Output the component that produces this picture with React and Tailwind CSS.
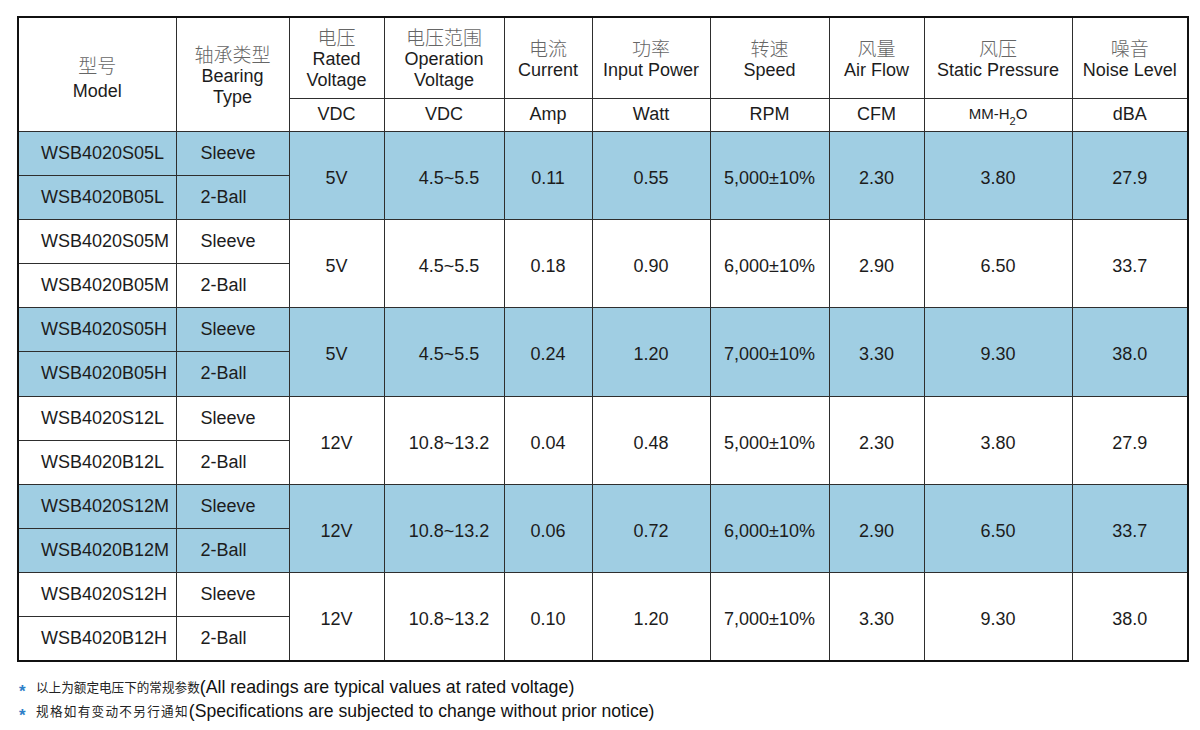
import React from "react";

const groups = [
  { blue: true, m: ["WSB4020S05L", "WSB4020B05L"], v: "5V", op: "4.5~5.5", a: "0.11", w: "0.55", rpm: "5,000±10%", cfm: "2.30", p: "3.80", db: "27.9" },
  { blue: false, m: ["WSB4020S05M", "WSB4020B05M"], v: "5V", op: "4.5~5.5", a: "0.18", w: "0.90", rpm: "6,000±10%", cfm: "2.90", p: "6.50", db: "33.7" },
  { blue: true, m: ["WSB4020S05H", "WSB4020B05H"], v: "5V", op: "4.5~5.5", a: "0.24", w: "1.20", rpm: "7,000±10%", cfm: "3.30", p: "9.30", db: "38.0" },
  { blue: false, m: ["WSB4020S12L", "WSB4020B12L"], v: "12V", op: "10.8~13.2", a: "0.04", w: "0.48", rpm: "5,000±10%", cfm: "2.30", p: "3.80", db: "27.9" },
  { blue: true, m: ["WSB4020S12M", "WSB4020B12M"], v: "12V", op: "10.8~13.2", a: "0.06", w: "0.72", rpm: "6,000±10%", cfm: "2.90", p: "6.50", db: "33.7" },
  { blue: false, m: ["WSB4020S12H", "WSB4020B12H"], v: "12V", op: "10.8~13.2", a: "0.10", w: "1.20", rpm: "7,000±10%", cfm: "3.30", p: "9.30", db: "38.0" },
];

const cjk = "font-['Noto_Sans_CJK_SC',sans-serif] text-[19px] leading-[25px] text-[#666] font-light";
const en = "text-[18px] leading-[21px] text-[#1c1c1c]";
const cell = "border border-[#2e2e2e] p-0 align-middle";
const span = `${cell} pt-[6px]`;

function Head({ zh, lines, gap = "" }) {
  return (
    <div className="flex flex-col items-center">
      <div className={cjk}>{zh}</div>
      {lines.map((l) => (
        <div key={l} className={`${en} ${gap}`}>{l}</div>
      ))}
    </div>
  );
}

export default function App() {
  return (
    <div className="w-[1200px] h-[730px] bg-white font-['Liberation_Sans',Arial,sans-serif] text-[#1c1c1c] overflow-hidden">
      <div className="pt-[16px] pl-[17px]">
        <table className="table-fixed border-collapse border-2 border-[#111] w-[1172px] text-center">
          <colgroup>
            <col className="w-[158px]" />
            <col className="w-[113px]" />
            <col className="w-[95px]" />
            <col className="w-[120px]" />
            <col className="w-[88px]" />
            <col className="w-[118px]" />
            <col className="w-[119px]" />
            <col className="w-[95px]" />
            <col className="w-[148px]" />
            <col className="w-[116px]" />
          </colgroup>
          <thead>
            <tr className="h-[81px]">
              <th rowSpan={2} className={`${cell} font-normal`}>
                <div className="pt-[6px]"><Head zh="型号" lines={["Model"]} gap="mt-[4px]" /></div>
              </th>
              <th rowSpan={2} className={`${cell} font-normal`}>
                <Head zh="轴承类型" lines={["Bearing", "Type"]} />
              </th>
              <th className={`${cell} font-normal`}><Head zh="电压" lines={["Rated", "Voltage"]} /></th>
              <th className={`${cell} font-normal`}><Head zh="电压范围" lines={["Operation", "Voltage"]} /></th>
              <th className={`${cell} font-normal`}><Head zh="电流" lines={["Current"]} /></th>
              <th className={`${cell} font-normal`}><Head zh="功率" lines={["Input Power"]} /></th>
              <th className={`${cell} font-normal`}><Head zh="转速" lines={["Speed"]} /></th>
              <th className={`${cell} font-normal`}><Head zh="风量" lines={["Air Flow"]} /></th>
              <th className={`${cell} font-normal`}><Head zh="风压" lines={["Static Pressure"]} /></th>
              <th className={`${cell} font-normal`}><Head zh="噪音" lines={["Noise Level"]} /></th>
            </tr>
            <tr className="h-[33px]">
              {["VDC", "VDC", "Amp", "Watt", "RPM", "CFM"].map((u, i) => (
                <th key={i} className={`${cell} font-normal text-[18px]`}>{u}</th>
              ))}
              <th className={`${cell} font-normal text-[15px]`}>
                MM-H<sub className="text-[11px] align-[-3px]">2</sub>O
              </th>
              <th className={`${cell} font-normal text-[18px]`}>dBA</th>
            </tr>
          </thead>
          <tbody className="text-[18px]">
            {groups.map((g, gi) => {
              const bg = g.blue ? "bg-[#a0cee3]" : "bg-white";
              const h2 = gi === 2 || gi === 5 ? "h-[45px]" : "h-[44px]";
              return (
                <React.Fragment key={gi}>
                  <tr className={`h-[44px] ${bg}`}>
                    <td className={`${cell} text-left pl-[22px]`}>{g.m[0]}</td>
                    <td className={`${cell} text-left pl-[24px]`}>Sleeve</td>
                    <td rowSpan={2} className={span}>{g.v}</td>
                    <td rowSpan={2} className={`${span} pl-[10px]`}>{g.op}</td>
                    <td rowSpan={2} className={span}>{g.a}</td>
                    <td rowSpan={2} className={span}>{g.w}</td>
                    <td rowSpan={2} className={span}>{g.rpm}</td>
                    <td rowSpan={2} className={span}>{g.cfm}</td>
                    <td rowSpan={2} className={span}>{g.p}</td>
                    <td rowSpan={2} className={span}>{g.db}</td>
                  </tr>
                  <tr className={`${h2} ${bg}`}>
                    <td className={`${cell} text-left pl-[22px]`}>{g.m[1]}</td>
                    <td className={`${cell} text-left pl-[24px]`}>2-Ball</td>
                  </tr>
                </React.Fragment>
              );
            })}
          </tbody>
        </table>
      </div>
      <div className="mt-[14px] pl-[19px] flex flex-col gap-[2px]">
        <div className="flex items-center h-[22px]">
          <span className="text-[#2f7fc8] text-[17px] font-bold w-[17px] translate-y-[5px]">*</span>
          <span className="font-['Noto_Sans_CJK_SC',sans-serif] text-[12.6px] text-[#222]">以上为额定电压下的常规参数</span>
          <span className="text-[17.8px] text-[#111]">(All readings are typical values at rated voltage)</span>
        </div>
        <div className="flex items-center h-[22px]">
          <span className="text-[#2f7fc8] text-[17px] font-bold w-[17px] translate-y-[5px]">*</span>
          <span className="font-['Noto_Sans_CJK_SC',sans-serif] text-[12.6px] tracking-[1.3px] text-[#222]">规格如有变动不另行通知</span>
          <span className="text-[17.6px] text-[#111]">(Specifications are subjected to change without prior notice)</span>
        </div>
      </div>
    </div>
  );
}
